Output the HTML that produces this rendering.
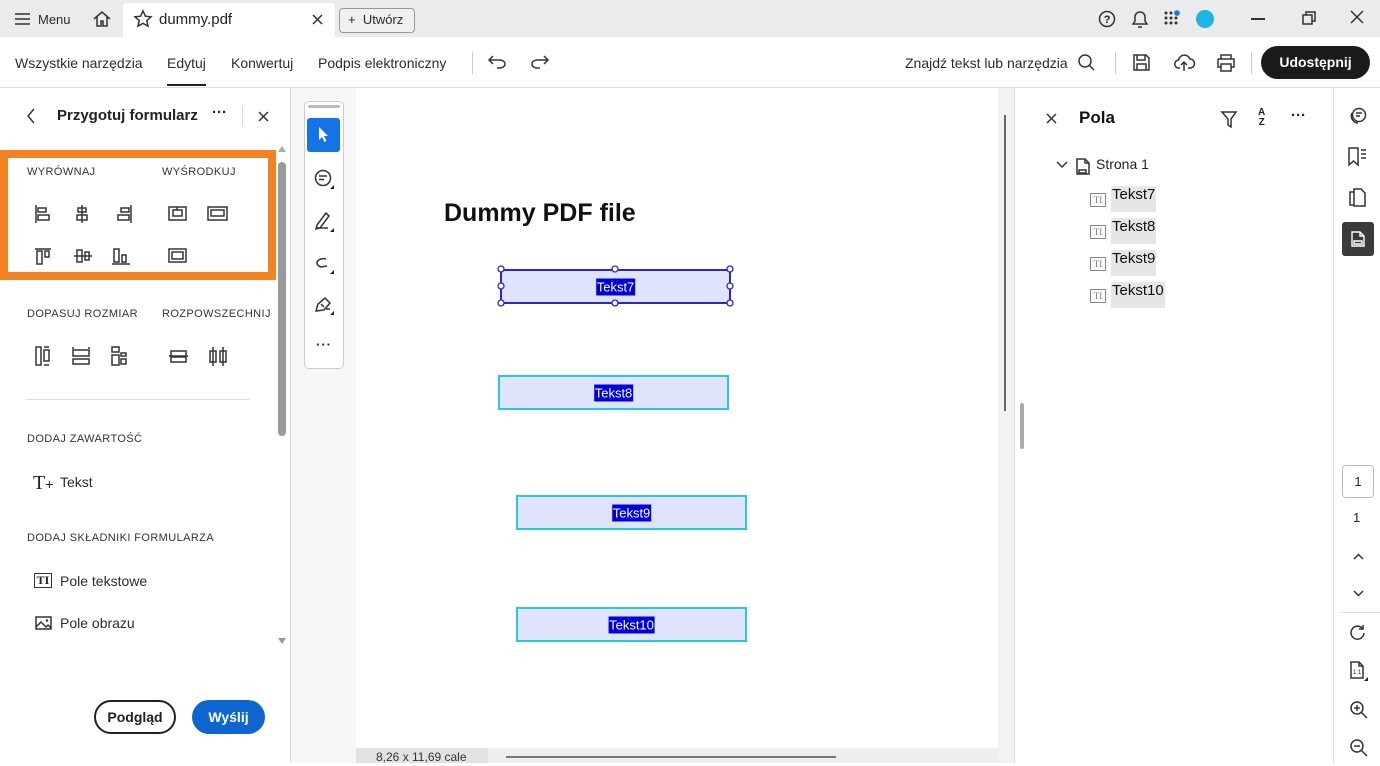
<!DOCTYPE html>
<html><head><meta charset="utf-8"><style>
*{margin:0;padding:0;box-sizing:border-box}
body{width:1380px;height:763px;overflow:hidden;background:#fff;font-family:"Liberation Sans",Arial,sans-serif;color:#222;position:relative}
.a{position:absolute}
.t{font-size:14px;color:#2c2c2c;white-space:nowrap}
.cap{font-size:11px;letter-spacing:.4px;color:#333;white-space:nowrap}
svg{position:absolute;overflow:visible}
.ic{stroke:#333;fill:none;stroke-width:1.5}
.fld{position:absolute;background:#dfe3fb;border:2px solid #27c7e6}
.fld span{position:absolute;left:50%;top:50%;transform:translate(-50%,-50%);background:#0000d8;color:#fff;font-size:13px;padding:1px 1px}
.li{position:absolute;font-size:15px;color:#111;background:#e6e6e6;padding:0 1px;height:26px;line-height:18px}
</style></head><body>
<!-- title bar -->
<div class="a" style="left:0;top:0;width:1380px;height:37px;background:#ebebeb"></div>
<div class="a" style="left:123px;top:3px;width:212px;height:34px;background:#fff;border-radius:4px 4px 0 0"></div>
<svg style="left:15px;top:13px" width="16" height="12"><path class="ic" d="M0 1h15M0 6h15M0 11h15"/></svg>
<div class="a t" style="left:38px;top:12px;font-size:13px">Menu</div>
<svg style="left:92px;top:10px" width="20" height="18"><path class="ic" stroke-width="1.8" d="M2 9L10 2l8 7M5 7v9h4v-5h2v5h4V7"/></svg>
<svg style="left:134px;top:10px" width="18" height="18"><path class="ic" d="M9 1l2.4 5.2 5.6.6-4.2 3.8 1.2 5.6L9 13.4 4 16.2l1.2-5.6L1 6.8l5.6-.6z"/></svg>
<div class="a t" style="left:159px;top:11px;font-size:15px;color:#222">dummy.pdf</div>
<svg style="left:313px;top:15px" width="10" height="10"><path class="ic" d="M0 0l9 9M9 0L0 9"/></svg>
<div class="a" style="left:339px;top:8px;width:76px;height:25px;border:1px solid #999;border-radius:4px;background:#f0f0f0"></div>
<div class="a t" style="left:348px;top:12px;font-size:13px">+&nbsp; Utwórz</div>
<svg style="left:1099px;top:11px" width="18" height="18"><circle class="ic" stroke-width="1.6" cx="8" cy="8" r="7.5"/><text x="4.8" y="12" font-size="11" font-weight="bold" fill="#222" font-family="Liberation Sans">?</text></svg>
<svg style="left:1131px;top:10px" width="18" height="20"><path class="ic" stroke-width="1.6" d="M2 14h14l-2-3V7a5 5 0 0 0-10 0v4zM7 17h4"/></svg>
<svg style="left:1164px;top:11px" width="18" height="16"><g fill="#333"><circle cx="2" cy="2" r="1.5"/><circle cx="7" cy="2" r="1.5"/><circle cx="2" cy="7" r="1.5"/><circle cx="7" cy="7" r="1.5"/><circle cx="12" cy="7" r="1.5"/><circle cx="2" cy="12" r="1.5"/><circle cx="7" cy="12" r="1.5"/><circle cx="12" cy="12" r="1.5"/></g><circle cx="13" cy="2" r="2.8" fill="#1473e6"/></svg>
<div class="a" style="left:1196px;top:10px;width:18px;height:18px;border-radius:50%;background:#1bb5e6"></div>
<div class="a" style="left:1251px;top:18px;width:14px;height:2px;background:#333"></div>
<svg style="left:1302px;top:11px" width="14" height="14"><path class="ic" d="M1 4h9v9H1zM4 4V1h9v9h-3"/></svg>
<svg style="left:1351px;top:11px" width="13" height="13"><path class="ic" d="M0 0l12 12M12 0L0 12"/></svg>
<!-- toolbar -->
<div class="a" style="left:0;top:87px;width:1380px;height:1px;background:#ddd"></div>
<div class="a t" style="left:15px;top:55px">Wszystkie narzędzia</div>
<div class="a t" style="left:167px;top:55px">Edytuj</div>
<div class="a" style="left:167px;top:84px;width:39px;height:2px;background:#222"></div>
<div class="a t" style="left:231px;top:55px">Konwertuj</div>
<div class="a t" style="left:318px;top:55px">Podpis elektroniczny</div>
<div class="a" style="left:472px;top:52px;width:1px;height:22px;background:#ccc"></div>
<svg style="left:488px;top:55px" width="20" height="14"><path class="ic" stroke-width="1.6" d="M5 1L1 5l4 4M1 5h11a5 4 0 0 1 0 8H9"/></svg>
<svg style="left:530px;top:55px" width="20" height="14"><path class="ic" stroke="#999" stroke-width="1.6" d="M14 1l4 4-4 4M18 5H7a5 4 0 0 0 0 8h3"/></svg>
<div class="a t" style="left:905px;top:55px">Znajdź tekst lub narzędzia</div>
<svg style="left:1078px;top:54px" width="18" height="18"><circle class="ic" stroke-width="1.8" cx="7" cy="7" r="6"/><path class="ic" stroke-width="1.8" d="M11.5 11.5L16 16"/></svg>
<div class="a" style="left:1115px;top:52px;width:1px;height:22px;background:#ccc"></div>
<svg style="left:1133px;top:54px" width="17" height="17"><path class="ic" stroke-width="1.6" d="M1 1h12l3 3v12H1zM4 1v5h8V1M4 16v-6h9v6"/></svg>
<svg style="left:1174px;top:53px" width="20" height="20"><path class="ic" stroke-width="1.7" d="M6 15H5a4 4 0 0 1-.5-8A6 6 0 0 1 16 6a4 4 0 0 1 0 9h-2M10 18V9M7 12l3-3 3 3"/></svg>
<svg style="left:1216px;top:54px" width="20" height="18"><path class="ic" stroke-width="1.6" d="M5 5V1h10v4M2 5h16v8h-3M5 13H2V5M5 10h10v7H5z"/></svg>
<div class="a" style="left:1251px;top:52px;width:1px;height:22px;background:#ccc"></div>
<div class="a" style="left:1261px;top:46px;width:109px;height:33px;border-radius:17px;background:#1b1b1b;color:#fff;font-weight:bold;font-size:14px;text-align:center;line-height:33px">Udostępnij</div>
<!-- left panel -->
<div class="a" style="left:290px;top:88px;width:1px;height:675px;background:#ddd"></div>
<svg style="left:26px;top:108px" width="10" height="16"><path class="ic" stroke="#222" stroke-width="2" d="M8 1L2 8l6 7"/></svg>
<div class="a" style="left:57px;top:107px;font-size:15px;font-weight:bold;color:#222">Przygotuj formularz</div>
<div class="a" style="left:212px;top:108px;font-size:15px;font-weight:bold;line-height:10px">···</div>
<div class="a" style="left:242px;top:106px;width:1px;height:20px;background:#ddd"></div>
<svg style="left:259px;top:112px" width="10" height="10"><path class="ic" stroke-width="1.6" d="M0 0l9 9M9 0L0 9"/></svg>
<div class="a" style="left:278px;top:162px;width:8px;height:274px;background:#9a9a9a;border-radius:4px"></div>
<div class="a" style="left:278px;top:146px;width:0;height:0;border:4px solid transparent;border-bottom:6px solid #aaa;border-top:0"></div>
<div class="a" style="left:278px;top:638px;width:0;height:0;border:4px solid transparent;border-top:6px solid #999;border-bottom:0"></div>
<div class="a" style="left:0;top:150px;width:276px;height:130px;border:8px solid #f58220"></div>
<div class="a cap" style="left:27px;top:166px">WYRÓWNAJ</div>
<div class="a cap" style="left:162px;top:166px">WYŚRODKUJ</div>
<svg style="left:35px;top:204px" width="220" height="65"><g class="ic" stroke-width="1.6">
<path d="M1 1v18M3 4h8v4H3zM3 11h11v5H3z"/>
<path d="M47 1v18M43 4h8v4h-8zM42 11h10v5H42z"/>
<path d="M96 1v18M86 4h8v4h-8zM83 11h11v5H83z"/>
<path d="M134 3h17v13h-17zM138 6h9v6h-9zM142 3v3"/>
<path d="M173 3h19v13h-19zM176 6h13v6h-13z"/>
<path d="M0 45h16M2 47h5v13H2zM10 47h4v6h-4z"/>
<path d="M39 52h18M42 46h5v12h-5zM50 48h4v8h-4z"/>
<path d="M77 60h18M79 45h5v13h-5zM87 51h4v7h-4z"/>
<path d="M134 45h17v13h-17zM137 48h11v7h-11z"/>
</g></svg>
<div class="a cap" style="left:27px;top:308px">DOPASUJ ROZMIAR</div>
<div class="a cap" style="left:162px;top:308px">ROZPOWSZECHNIJ</div>
<svg style="left:35px;top:346px" width="200" height="22"><g class="ic" stroke-width="1.6">
<path d="M1 1h5v18H1zM9 4h5v11H9zM9 1h5M9 19h5"/>
<path d="M38 4h16v6H38zM38 13h16v5H38zM38 1v2M54 1v2"/>
<path d="M77 9h7v10h-7zM86 13h5v5h-5zM77 1h7v5h-7zM86 7h5v3h-5z"/>
<path d="M134 10h19M136 5h15v5H136zM136 11h15v5H136z"/>
<path d="M178 1v19M188 1v19M175 5h6v11h-6zM185 5h6v11h-6z"/>
</g></svg>
<div class="a" style="left:26px;top:399px;width:224px;height:1px;background:#ddd"></div>
<div class="a cap" style="left:27px;top:433px">DODAJ ZAWARTOŚĆ</div>
<div class="a" style="left:33px;top:472px;font-family:'Liberation Serif',serif;font-size:20px;color:#222">T<span style="font-size:14px;font-family:'Liberation Sans'">+</span></div>
<div class="a t" style="left:60px;top:474px;font-size:14px">Tekst</div>
<div class="a cap" style="left:27px;top:532px">DODAJ SKŁADNIKI FORMULARZA</div>
<div class="a" style="left:34px;top:573px;width:18px;height:15px;border:1.5px solid #333;font-family:'Liberation Serif',serif;font-size:12px;line-height:12px;text-align:center;font-weight:bold">TI</div>
<div class="a t" style="left:60px;top:573px">Pole tekstowe</div>
<svg style="left:35px;top:616px" width="17" height="14"><path class="ic" stroke-width="1.4" d="M1 1h15v12H1zM1 11l5-5 5 5 2-2 3 3"/><circle cx="12" cy="4.5" r="1.3" fill="#333"/></svg>
<div class="a t" style="left:60px;top:615px">Pole obrazu</div>
<div class="a" style="left:94px;top:700px;width:82px;height:34px;border:2px solid #222;border-radius:17px;text-align:center;line-height:30px;font-size:14px;font-weight:bold">Podgląd</div>
<div class="a" style="left:192px;top:700px;width:73px;height:34px;background:#0d66d0;border-radius:17px;text-align:center;line-height:34px;font-size:14px;font-weight:bold;color:#fff">Wyślij</div>
<!-- center -->
<div class="a" style="left:291px;top:88px;width:65px;height:675px;background:#f7f7f7"></div>
<div class="a" style="left:998px;top:88px;width:16px;height:675px;background:#f2f2f2"></div>
<div class="a" style="left:1004px;top:115px;width:2px;height:296px;background:#666"></div>
<div class="a" style="left:1020px;top:403px;width:4px;height:46px;background:#aaa;border-radius:2px"></div>
<div class="a" style="left:1014px;top:88px;width:1px;height:675px;background:#ddd"></div>
<div class="a" style="left:304px;top:101px;width:40px;height:268px;background:#fff;border:1px solid #ccc;border-radius:5px"></div>
<div class="a" style="left:308px;top:105px;width:32px;height:3px;background:#bbb;border-radius:2px"></div>
<div class="a" style="left:307px;top:118px;width:33px;height:34px;background:#1473e6;border-radius:3px"></div>
<svg style="left:318px;top:127px" width="12" height="16"><path fill="#fff" d="M1 0v13l3-3 2.5 5 2-1-2.5-5H10z"/></svg>
<svg style="left:314px;top:169px" width="24" height="22"><circle class="ic" stroke-width="1.5" cx="9" cy="9" r="7.5"/><path class="ic" d="M5 7h8M5 10.5h5"/><path d="M16 20l4-4v4z" fill="#222"/></svg>
<svg style="left:314px;top:210px" width="24" height="22"><path class="ic" stroke-width="1.5" d="M3 15l9-12 3 3-9 12-4 1zM2 18h12"/><path d="M16 22l4-4v4z" fill="#222"/></svg>
<svg style="left:314px;top:254px" width="24" height="22"><path class="ic" stroke-width="1.5" d="M12 5a6 4 0 1 0-5 8l6-1"/><path d="M16 20l4-4v4z" fill="#222"/></svg>
<svg style="left:314px;top:295px" width="24" height="22"><path class="ic" stroke-width="1.5" d="M2 16l2-7 7-6 5 5-6 7zM7 9l3 3M12 14h4"/><path d="M16 20l4-4v4z" fill="#222"/></svg>
<div class="a" style="left:316px;top:337px;font-size:13px;font-weight:bold;letter-spacing:1px">···</div>
<div class="a" style="left:444px;top:199px;font-size:25px;font-weight:bold;color:#111">Dummy PDF file</div>
<div class="fld" style="left:500px;top:269px;width:231px;height:35px;border-color:#2828d0"><span>Tekst7</span></div>
<svg style="left:496px;top:265px" width="240" height="44"><g fill="#fff" stroke="#2828d0" stroke-width="1.3"><circle cx="5" cy="4" r="3"/><circle cx="119" cy="4" r="3"/><circle cx="234" cy="4" r="3"/><circle cx="5" cy="21" r="3"/><circle cx="234" cy="21" r="3"/><circle cx="5" cy="38" r="3"/><circle cx="119" cy="38" r="3"/><circle cx="234" cy="38" r="3"/></g></svg>
<div class="fld" style="left:498px;top:375px;width:231px;height:35px"><span>Tekst8</span></div>
<div class="fld" style="left:516px;top:495px;width:231px;height:35px"><span>Tekst9</span></div>
<div class="fld" style="left:516px;top:607px;width:231px;height:35px"><span>Tekst10</span></div>
<div class="a" style="left:356px;top:748px;width:642px;height:15px;background:#eee"></div>
<div class="a" style="left:356px;top:748px;width:132px;height:15px;background:#e2e2e2;font-size:12px;color:#333;padding-left:20px;line-height:18px">8,26 x 11,69 cale</div>
<div class="a" style="left:506px;top:756px;width:330px;height:2px;background:#777"></div>
<!-- right panel -->
<svg style="left:1047px;top:114px" width="10" height="10"><path class="ic" stroke="#222" stroke-width="1.8" d="M0 0l9 9M9 0L0 9"/></svg>
<div class="a" style="left:1079px;top:108px;font-size:17px;font-weight:bold;color:#111">Pola</div>
<svg style="left:1221px;top:111px" width="17" height="18"><path class="ic" stroke-width="1.6" d="M1 1h14l-5 7v8l-3-2V8z"/></svg>
<div class="a" style="left:1258px;top:108px;font-size:10px;font-weight:bold;line-height:10px;text-align:center">A<br>Z</div>
<div class="a" style="left:1291px;top:111px;font-size:15px;font-weight:bold;line-height:10px">···</div>
<svg style="left:1056px;top:161px" width="12" height="8"><path class="ic" stroke-width="1.5" d="M1 1l5 5 5-5"/></svg>
<svg style="left:1076px;top:158px" width="14" height="17"><path class="ic" stroke="#666" stroke-width="1.2" d="M1 1h8l4 4v11H1zM9 1v4h4M3 12h7v3H3z"/></svg>
<div class="a t" style="left:1096px;top:156px;color:#222">Strona 1</div>
<div class="li" style="left:1111px;top:186px">Tekst7</div>
<div class="li" style="left:1111px;top:218px">Tekst8</div>
<div class="li" style="left:1111px;top:250px">Tekst9</div>
<div class="li" style="left:1111px;top:282px">Tekst10</div>
<div class="a" style="left:1090px;top:193px;width:16px;height:14px;border:1px solid #888;font-size:9px;color:#777;text-align:center;line-height:12px;font-family:'Liberation Serif',serif">TI</div>
<div class="a" style="left:1090px;top:225px;width:16px;height:14px;border:1px solid #888;font-size:9px;color:#777;text-align:center;line-height:12px;font-family:'Liberation Serif',serif">TI</div>
<div class="a" style="left:1090px;top:257px;width:16px;height:14px;border:1px solid #888;font-size:9px;color:#777;text-align:center;line-height:12px;font-family:'Liberation Serif',serif">TI</div>
<div class="a" style="left:1090px;top:289px;width:16px;height:14px;border:1px solid #888;font-size:9px;color:#777;text-align:center;line-height:12px;font-family:'Liberation Serif',serif">TI</div>
<!-- right rail -->
<div class="a" style="left:1333px;top:88px;width:1px;height:675px;background:#ddd"></div>
<svg style="left:1348px;top:107px" width="20" height="18"><circle class="ic" stroke-width="1.6" cx="11" cy="8" r="6.5"/><path class="ic" stroke-width="1.6" d="M4 6a7 7 0 0 0 6 10M8 6h6M8 9h4"/></svg>
<svg style="left:1348px;top:147px" width="20" height="20"><path class="ic" stroke-width="1.7" d="M1 1h9v17l-4.5-4L1 18zM13 3h5M13 7h5M13 11h5"/></svg>
<svg style="left:1349px;top:188px" width="18" height="20"><path class="ic" stroke-width="1.6" d="M5 4V1h7l4 4v13H5zM5 4H1v13h4"/></svg>
<div class="a" style="left:1342px;top:222px;width:32px;height:34px;background:#3b3b3b;border-radius:3px"></div>
<svg style="left:1351px;top:231px" width="14" height="16"><path fill="none" stroke="#fff" stroke-width="1.4" d="M1 1h8l4 4v10H1zM9 1v4h4M3 10h8v3H3z"/></svg>
<div class="a" style="left:1342px;top:465px;width:32px;height:33px;border:1px solid #bbb;border-radius:4px;text-align:center;line-height:31px;font-size:13px">1</div>
<div class="a" style="left:1353px;top:510px;font-size:13px">1</div>
<svg style="left:1353px;top:553px" width="11" height="7"><path class="ic" stroke="#666" stroke-width="1.5" d="M1 6l4.5-4.5L10 6"/></svg>
<svg style="left:1353px;top:590px" width="11" height="7"><path class="ic" stroke="#666" stroke-width="1.5" d="M1 1l4.5 4.5L10 1"/></svg>
<div class="a" style="left:1341px;top:612px;width:39px;height:1px;background:#ddd"></div>
<svg style="left:1350px;top:625px" width="17" height="17"><path class="ic" stroke-width="1.8" d="M14 8a6.5 6.5 0 1 1-2-5M13 0v4h-4"/></svg>
<svg style="left:1350px;top:661px" width="19" height="20"><path class="ic" stroke-width="1.5" d="M1 1h8l4 4v12H1zM9 1v4h4"/><text x="3" y="13" font-size="6" fill="#222" font-family="Liberation Sans">1:1</text><path d="M14 20l4-4v4z" fill="#222"/></svg>
<svg style="left:1350px;top:701px" width="18" height="18"><circle class="ic" stroke-width="1.7" cx="7" cy="7" r="6"/><path class="ic" stroke-width="1.7" d="M11.5 11.5L17 17M4 7h6M7 4v6"/></svg>
<svg style="left:1350px;top:739px" width="18" height="18"><circle class="ic" stroke-width="1.7" cx="7" cy="7" r="6"/><path class="ic" stroke-width="1.7" d="M11.5 11.5L17 17M4 7h6"/></svg>
</body></html>
